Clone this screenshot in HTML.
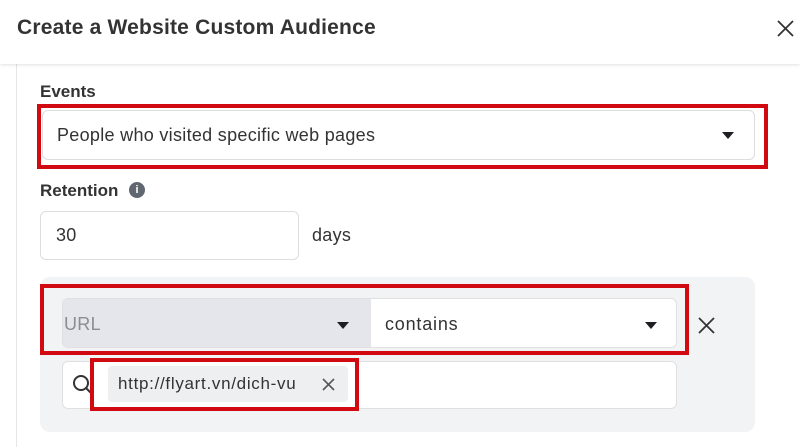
<!DOCTYPE html>
<html><head><style>
*{margin:0;padding:0;box-sizing:border-box}
body{width:800px;height:447px;background:#fff;font-family:"Liberation Sans",sans-serif;color:#1c1e21;position:relative;overflow:hidden}
.a{position:absolute}
.red{position:absolute;border:4px solid #d10a12}
.caret{position:absolute;width:0;height:0;border-left:6px solid transparent;border-right:6px solid transparent;border-top:7px solid #1c1e21}
.t{font-size:18px;letter-spacing:0.3px}
</style></head><body>
<div class="a" style="left:0;top:0;width:800px;height:64px;background:#fff;box-shadow:0 1px 3px rgba(0,0,0,.12);z-index:2"></div>
<div class="a" style="left:17px;top:16px;font-size:21px;letter-spacing:0.2px;font-weight:bold;color:#333;z-index:3">Create a Website Custom Audience</div>
<svg class="a" style="left:777px;top:20px;z-index:3" width="17" height="17"><path d="M1 1L16 16M16 1L1 16" stroke="#333" stroke-width="1.8"/></svg>
<div class="a" style="left:16px;top:64px;width:1px;height:383px;background:#e6e6e6"></div>
<div class="a" style="left:40px;top:82px;font-size:17px;font-weight:bold;color:#333">Events</div>
<div class="a" style="left:42px;top:110px;width:713px;height:50px;border:1px solid #ddd;border-radius:6px;background:#fff"></div>
<div class="a t" style="left:57px;top:125px;color:#333">People who visited specific web pages</div>
<div class="caret" style="left:722px;top:132px"></div>
<div class="red" style="left:37px;top:104px;width:731px;height:65px"></div>
<div class="a" style="left:40px;top:181px;font-size:17px;font-weight:bold;color:#333">Retention</div>
<div class="a" style="left:129px;top:182px;width:16px;height:16px;border-radius:50%;background:#606770;color:#fff;font-size:11px;font-weight:bold;text-align:center;line-height:16px">i</div>
<div class="a" style="left:40px;top:211px;width:259px;height:49px;border:1px solid #ddd;border-radius:6px"></div>
<div class="a t" style="left:56px;top:225px;color:#333">30</div>
<div class="a t" style="left:312px;top:225px;color:#333">days</div>
<div class="a" style="left:40px;top:277px;width:715px;height:155px;background:#f2f3f5;border-radius:10px"></div>
<div class="a" style="left:62px;top:298px;width:615px;height:50px;border:1px solid #e0e0e0;border-radius:6px;background:#fff;overflow:hidden">
<div class="a" style="left:0;top:0;width:308px;height:50px;background:#e4e6eb"></div></div>
<div class="a t" style="left:64px;top:314px;color:#8a8d91">URL</div>
<div class="caret" style="left:337px;top:322px"></div>
<div class="a t" style="left:385px;top:314px;color:#333;letter-spacing:0.8px">contains</div>
<div class="caret" style="left:645px;top:322px"></div>
<svg class="a" style="left:698px;top:317px" width="17" height="17"><path d="M1 1L16 16M16 1L1 16" stroke="#333" stroke-width="1.8"/></svg>
<div class="red" style="left:40px;top:284px;width:649px;height:71px"></div>
<div class="a" style="left:62px;top:361px;width:615px;height:48px;border:1px solid #e0e0e0;border-radius:6px;background:#fff"></div>
<svg class="a" style="left:72px;top:374px" width="22" height="22"><circle cx="9" cy="9" r="7" fill="none" stroke="#333" stroke-width="2"/><path d="M14 14L20 20" stroke="#333" stroke-width="2"/></svg>
<div class="a" style="left:108px;top:366px;width:240px;height:36px;background:#eeeff1;border-radius:4px"></div>
<div class="a" style="left:118px;top:374px;font-size:17px;letter-spacing:0.7px;color:#333">http://flyart.vn/dich-vu</div>
<svg class="a" style="left:322px;top:378px" width="13" height="13"><path d="M1 1L12 12M12 1L1 12" stroke="#555" stroke-width="1.6"/></svg>
<div class="red" style="left:90px;top:358px;width:269px;height:53px"></div>
</body></html>
